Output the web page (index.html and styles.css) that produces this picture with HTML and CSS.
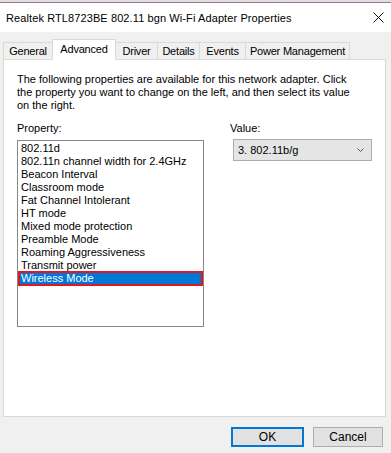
FILE: index.html
```html
<!DOCTYPE html>
<html lang="en">
<head>
    <meta charset="UTF-8">
    <meta name="viewport" content="width=device-width, initial-scale=1.0">
    <title>Realtek RTL8723BE 802.11 bgn Wi-Fi Adapter Properties</title>
    <link rel="stylesheet" href="styles.css">
</head>
<body>
    <div class="dialog">
        <div class="top-strip"></div>
        <div class="title-bar">
            <span class="title">Realtek RTL8723BE 802.11 bgn Wi-Fi Adapter Properties</span>
            <svg class="close-icon" width="11" height="11" viewBox="0 0 11 11">
                <path d="M0.5 0.5 L10.5 10.5 M10.5 0.5 L0.5 10.5" stroke="#111" stroke-width="1" fill="none"/>
            </svg>
        </div>

        <div class="tabs">
            <div class="tab tab-general">General</div>
            <div class="tab tab-advanced selected">Advanced</div>
            <div class="tab tab-driver">Driver</div>
            <div class="tab tab-details">Details</div>
            <div class="tab tab-events">Events</div>
            <div class="tab tab-power">Power Management</div>
        </div>

        <div class="panel">
            <p class="intro">
                The following properties are available for this network adapter. Click<br>
                the property you want to change on the left, and then select its value<br>
                on the right.
            </p>
            <div class="columns">
                <div class="property-col">
                    <div class="field-label">Property:</div>
                    <ul class="listbox">
                        <li>802.11d</li>
                        <li>802.11n channel width for 2.4GHz</li>
                        <li>Beacon Interval</li>
                        <li>Classroom mode</li>
                        <li>Fat Channel Intolerant</li>
                        <li>HT mode</li>
                        <li>Mixed mode protection</li>
                        <li>Preamble Mode</li>
                        <li>Roaming Aggressiveness</li>
                        <li>Transmit power</li>
                        <li class="selected">Wireless Mode</li>
                    </ul>
                </div>
                <div class="value-col">
                    <div class="field-label">Value:</div>
                    <div class="combo">
                        <span>3. 802.11b/g</span>
                        <svg class="chevron" width="7" height="4" viewBox="0 0 7 4">
                            <path d="M0.5 0.5 L3.5 3.5 L6.5 0.5" stroke="#555" stroke-width="1" fill="none"/>
                        </svg>
                    </div>
                </div>
            </div>
        </div>

        <div class="buttons">
            <button class="btn btn-default">OK</button>
            <button class="btn">Cancel</button>
        </div>
    </div>
</body>
</html>
```

FILE: styles.css
```css
body {
    margin: 0;
    padding: 0;
    background-color: #f0f0f0;
    font-family: 'Liberation Sans', Arial, sans-serif;
    color: #000;
}

.dialog {
    width: 391px;
    height: 453px;
    overflow: hidden;
}

.top-strip {
    height: 2px;
    background-color: #e4dce4;
    border-bottom: 1px solid #8c7c8c;
}

.title-bar {
    height: 29px;
    background-color: #fff;
    display: flex;
    align-items: center;
    padding: 0 7px 0 6px;
}

.title {
    flex: 1;
    font-size: 11px;
    letter-spacing: 0.1px;
}

.close-icon {
    display: block;
}

/* tabs */
.tabs {
    display: flex;
    align-items: flex-end;
    height: 27px;
    padding-left: 3px;
}

.tab {
    box-sizing: border-box;
    height: 17px;
    margin-right: -1px;
    border: 1px solid #d9d9d9;
    border-bottom: none;
    background-color: #f0f0f0;
    font-size: 11px;
    letter-spacing: -0.2px;
    line-height: 17px;
    text-align: center;
    white-space: nowrap;
}

.tab.selected {
    position: relative;
    z-index: 1;
    height: 21px;
    margin-bottom: -1px;
    line-height: 18px;
    background-color: #fff;
}

.tab-general { width: 50px; }
.tab-advanced { width: 64px; }
.tab-driver { width: 43px; }
.tab-details { width: 43px; }
.tab-events { width: 47px; }
.tab-power { width: 105px; }

/* page */
.panel {
    box-sizing: border-box;
    width: 383px;
    height: 358px;
    margin-left: 3px;
    padding: 13px 13px 0 13px;
    border: 1px solid #d9d9d9;
    background-color: #fff;
    font-size: 11px;
}

.intro {
    margin: 0;
    line-height: 13px;
    white-space: nowrap;
}

.columns {
    display: flex;
    margin-top: 10px;
}

.property-col {
    width: 216px;
}

.field-label {
    height: 13px;
    line-height: 13px;
    margin-bottom: 5px;
}

.listbox {
    box-sizing: border-box;
    width: 187px;
    height: 187px;
    margin: 0;
    padding: 1px;
    list-style: none;
    border: 1px solid #828790;
}

.listbox li {
    height: 13px;
    line-height: 13px;
    padding-left: 2px;
}

.listbox li.selected {
    background-color: #0078d7;
    color: #fff;
    outline: 2px solid #e3161f;
    outline-offset: -1px;
}

.value-col .field-label {
    margin-bottom: 4px;
}

.combo {
    box-sizing: border-box;
    width: 139px;
    height: 22px;
    margin-left: 3px;
    padding: 0 7px 0 4px;
    display: flex;
    align-items: center;
    justify-content: space-between;
    background-color: #e5e5e5;
    border: 1px solid #adadad;
}

.chevron {
    display: block;
}

/* footer buttons */
.buttons {
    display: flex;
    justify-content: flex-end;
    gap: 9px;
    padding: 10px 8px 0 0;
}

.btn {
    box-sizing: border-box;
    width: 70px;
    height: 20px;
    padding: 0;
    font-family: 'Liberation Sans', Arial, sans-serif;
    font-size: 12px;
    color: #000;
    background-color: #e1e1e1;
    border: 1px solid #adadad;
}

.btn-default {
    width: 73px;
    border: 2px solid #0078d7;
}
```
